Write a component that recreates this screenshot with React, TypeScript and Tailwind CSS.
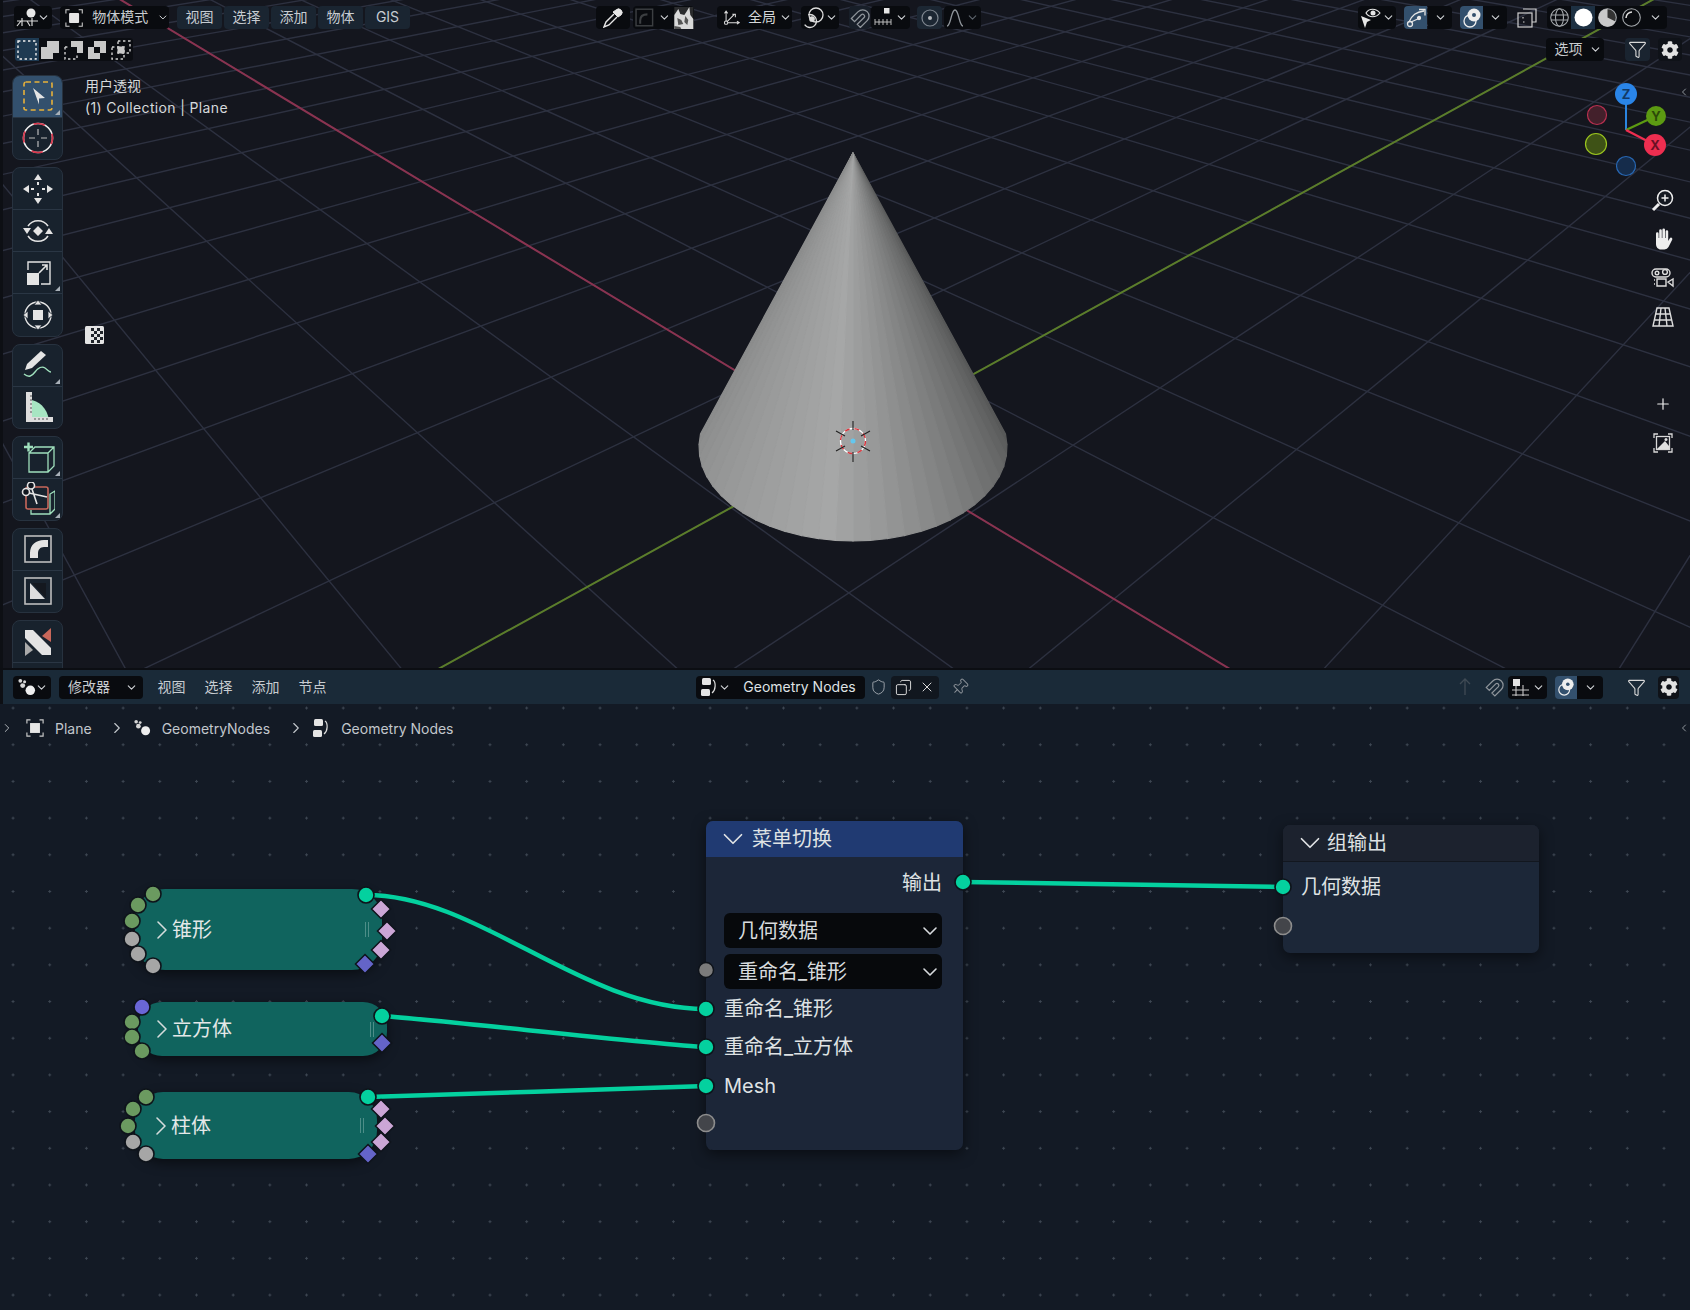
import { ChevronDown, ChevronRight, Copy, Funnel, Pin, Plus, Shield, X } from "lucide-react";
import { FaCog } from "react-icons/fa";

const O = [852, 441];
const V1 = [-416, -324];
const V2 = [2242, -325];
const STEP_U = 0.0856;
const STEP_V = 0.08;

// a grid line runs from one vanishing point through the k-th mark on the other axis
function gridLine(from: number[], along: number[], k: number, s: number) {
  const w = 1 + k * s;
  const px = (O[0] + k * s * along[0]) / w;
  const py = (O[1] + k * s * along[1]) / w;
  return { x1: from[0], y1: from[1], x2: from[0] + (px - from[0]) * 6, y2: from[1] + (py - from[1]) * 6 };
}

function range(a: number, b: number) {
  const out: number[] = [];
  for (let i = a; i <= b; i++) out.push(i);
  return out;
}

function Grid() {
  return (
    <svg className="absolute left-[-3px] top-0" width={1690} height={668}>
      {range(-12, 40).map((k) => (
        <line key={"a" + k} {...gridLine(V1, V2, k, STEP_V)} stroke="#2d3140" strokeWidth={1.4} />
      ))}
      {range(-11, 40).map((k) => (
        <line key={"b" + k} {...gridLine(V2, V1, k, STEP_U)} stroke="#2d3140" strokeWidth={1.4} />
      ))}
      <line {...gridLine(V1, V2, 0, STEP_V)} stroke="#8a3350" strokeWidth={2} />
      <line {...gridLine(V2, V1, 0, STEP_U)} stroke="#5b7d2a" strokeWidth={2} />
      <Cone />
    </svg>
  );
}

function Cone() {
  const cx = 853;
  const cy = 447;
  const n = 30;
  const pts = range(0, n).map((i) => {
    const t = ((-8 + (196 * i) / n) * Math.PI) / 180;
    return [cx + 154 * Math.cos(t), cy + 94 * Math.sin(t)];
  });
  return (
    <g>
      {pts.slice(0, n).map((p, i) => {
        const q = pts[i + 1];
        const f = i / (n - 1);
        const c = Math.round(f < 0.55 ? 88 + (f / 0.55) * 78 : 166 - ((f - 0.55) / 0.45) * 26);
        const col = `rgb(${c},${c + 1},${c + 1})`;
        return <polygon key={i} points={`853,153 ${p[0]},${p[1]} ${q[0]},${q[1]}`} fill={col} stroke={col} strokeWidth={1.2} />;
      })}
      <circle cx={853} cy={441} r={12.5} fill="none" stroke="#fff" strokeWidth={1.3} />
      <circle cx={853} cy={441} r={12.5} fill="none" stroke="#d8343c" strokeWidth={1.4} strokeDasharray="5 5" />
      <path d="M853 421v9M853 452v10M836 431l9 5M861 446l9 5M836 451l9-5M861 436l9-5" stroke="#222" strokeWidth={1.1} />
      <circle cx={853} cy={441} r={2.5} fill="#63c7ee" />
    </g>
  );
}

function Gizmo() {
  return (
    <svg className="absolute right-0 top-[80px]" width={110} height={105} viewBox="1580 80 110 105">
      <circle cx={1597} cy={115} r={9.5} fill="#43202b" stroke="#b93050" strokeWidth={1.2} />
      <circle cx={1596} cy={144} r={10.5} fill="#3e5216" stroke="#9ac41f" strokeWidth={1.2} />
      <circle cx={1626} cy={166} r={9.5} fill="#152c4b" stroke="#2868b4" strokeWidth={1.2} />
      <path d="M1626 130V94" stroke="#2a85e0" strokeWidth={2} />
      <path d="M1626 130l30-14" stroke="#5c9a12" strokeWidth={2.4} />
      <path d="M1626 130l29 15" stroke="#ee2e50" strokeWidth={2.4} />
      <circle cx={1626} cy={94} r={11} fill="#2a85e8" />
      <circle cx={1656} cy={116} r={10} fill="#5c9a12" />
      <circle cx={1655} cy={145} r={11} fill="#ee2e50" />
      <text x={1626} y={99} textAnchor="middle" fontSize={13} fontWeight={700} fill="#123a66">Z</text>
      <text x={1656} y={121} textAnchor="middle" fontSize={13} fontWeight={700} fill="#2c4a08">Y</text>
      <text x={1655} y={150} textAnchor="middle" fontSize={13} fontWeight={700} fill="#6b1024">X</text>
    </svg>
  );
}

function Chev({ dim }: { dim?: boolean }) {
  return <ChevronDown size={13} strokeWidth={2} className={dim ? "text-[#5d646c]" : "text-[#d0d3d6]"} />;
}

function Nodes3({ size = 20 }: { size?: number }) {
  return (
    <svg width={size} height={size} viewBox="0 0 20 20" fill="#d5d5d5">
      <circle cx="3.5" cy="3" r="2" />
      <circle cx="8" cy="4" r="1.6" />
      <circle cx="6" cy="8" r="2.6" />
      <circle cx="14" cy="13" r="5" fill="#eee" />
    </svg>
  );
}

function ObjectMode() {
  return (
    <svg width={20} height={20} viewBox="0 0 20 20" fill="none" stroke="#c9c9c9" strokeWidth={1.2}>
      <path d="M1 5V1h4M15 1h4v4M19 15v4h-4M5 19H1v-4" />
      <rect x="4.5" y="4.5" width="11" height="11" rx="1" fill="#e6e6e6" stroke="none" />
    </svg>
  );
}

function ViewIcon() {
  return (
    <svg width={24} height={20} viewBox="0 0 24 20" fill="none" stroke="#d8d8d8" strokeWidth={1.2}>
      <path d="M1 13h21M1 18l4-5M14 18l-3-5M6 10v8M16 10v8" />
      <circle cx="15" cy="5" r="4.5" fill="#e8e8e8" stroke="none" />
    </svg>
  );
}

function SelMode({ kind }: { kind: number }) {
  const dash = { fill: "none", stroke: "#d0d0d0", strokeWidth: 1.4, strokeDasharray: "2.4 2.6" };
  return (
    <svg width={20} height={20} viewBox="0 0 20 20">
      {kind === 0 && <rect x="1" y="1" width="18" height="18" {...dash} stroke="#f0f0f0" />}
      {kind === 1 && <path d="M7 1h12v12h-6v6H1V7h6z" fill="#c8c8c8" />}
      {kind === 2 && <><path d="M7 1h12v12h-6V7H7z" fill="#c8c8c8" /><path d="M1 7h4M1 7v12h12v-4M5 7" {...dash} /></>}
      {kind === 3 && <><path d="M7 1h12v12h-6v6H1V7h6z" fill="#c8c8c8" /><rect x="7" y="7" width="6" height="6" fill="#0a0c10" /></>}
      {kind === 4 && <><rect x="1" y="7" width="12" height="12" {...dash} /><rect x="7" y="1" width="12" height="12" {...dash} /><rect x="6.5" y="6.5" width="7" height="7" fill="#c8c8c8" /></>}
    </svg>
  );
}

function ToolIcon({ kind }: { kind: string }) {
  const w = "#e4e4e4";
  const green = "#9fe0bd";
  return (
    <svg width={34} height={34} viewBox="0 0 34 34" fill="none">
      {kind === "select" && (
        <>
          <rect x="3" y="3" width="28" height="28" rx="2" stroke="#e8b13a" strokeWidth={1.6} strokeDasharray="5 3.5" />
          <path d="M12 9l12 10-6 .5 0 6z" fill={w} />
        </>
      )}
      {kind === "cursor" && (
        <>
          <circle cx="17" cy="17" r="14.5" stroke="#eee" strokeWidth={1.6} />
          <circle cx="17" cy="17" r="14.5" stroke="#d8344a" strokeWidth={1.7} strokeDasharray="11.4 11.4" strokeDashoffset={5} />
          <path d="M17 8v6M17 20v6M8 17h6M20 17h6" stroke="#bbb" strokeWidth={1.2} />
        </>
      )}
      {kind === "move" && (
        <path d="M17 2l4 6h-8zM17 32l4-6h-8zM2 17l6-4v8zM32 17l-6-4v8zM16 10h2v3h-2zM16 21h2v3h-2zM10 16h3v2h-3zM21 16h3v2h-3z" fill={w} />
      )}
      {kind === "rotate" && (
        <>
          <path d="M7 12A12 12 0 0 1 27 12M27 22A12 12 0 0 1 7 22" stroke={w} strokeWidth={1.5} />
          <path d="M17 12l5 5-5 5-5-5zM2 14h8l-4 6zM24 20h8l-4-6z" fill={w} />
        </>
      )}
      {kind === "scale" && (
        <>
          <rect x="6" y="17" width="12" height="12" fill={w} />
          <path d="M7 14V6h22v22H20" stroke={w} strokeWidth={1.4} />
          <path d="M18 17l8-8M21 9h5v5" stroke={w} strokeWidth={1.6} />
        </>
      )}
      {kind === "transform" && (
        <>
          <circle cx="17" cy="17" r="13" stroke={w} strokeWidth={1.4} />
          <rect x="12" y="12" width="10" height="10" fill={w} />
          <path d="M17 2l4 5h-8zM17 32l4-5h-8zM2 17l5-4v8zM32 17l-5-4v8z" fill={w} stroke="#18222d" strokeWidth={0.8} />
        </>
      )}
      {kind === "annotate" && (
        <>
          <path d="M4 22l2-6L20 3l5 4L11 20z" fill={w} />
          <path d="M3 26c5 4 8 2 11-2s7-6 10-4 4 4 6 4" stroke={green} strokeWidth={1.4} />
        </>
      )}
      {kind === "measure" && (
        <>
          <path d="M8 30V10c10 0 18 8 20 20z" fill="#a7e5c2" />
          <path d="M5 2h6v25h21v5H5z" fill="#ddd" />
          <path d="M9 6h2M9 10h2M9 14h2M9 18h2M9 22h2M14 28v2M18 28v2M22 28v2M26 28v2" stroke="#555" strokeWidth={1} />
        </>
      )}
      {kind === "add" && (
        <>
          <path d="M3 7h9M7.500 2.500v9" stroke={green} strokeWidth={2.4} />
          <path d="M8 13h19v19H8zM8 13l6-6h19v19l-6 6M27 13l6-6" stroke={green} strokeWidth={1.3} />
        </>
      )}
      {kind === "cut" && (
        <>
          <path d="M10 28v4h19l5-5V9l-5 3v20M29 12" stroke={green} strokeWidth={1.3} />
          <rect x="5" y="5" width="22" height="22" rx="2" stroke="#c8675a" strokeWidth={1.6} />
          <circle cx="5" cy="10" r="3.5" fill="#10161e" stroke={w} strokeWidth={1.6} />
          <circle cx="10" cy="3.5" r="3.5" fill="#10161e" stroke={w} strokeWidth={1.6} />
          <path d="M8 11l18 4M11 7l5 15" stroke={w} strokeWidth={1.6} />
        </>
      )}
      {kind === "fillet" && (
        <>
          <rect x="4" y="4" width="26" height="26" stroke="#bdbdbd" strokeWidth={1.6} />
          <path d="M9 26v-5c0-8 6-13 14-13h4v7h-4c-4 0-6 3-6 6v5z" fill={w} />
        </>
      )}
      {kind === "shear" && (
        <>
          <rect x="4" y="4" width="26" height="26" stroke="#bdbdbd" strokeWidth={1.6} />
          <path d="M9 9v16h15z" fill="#ddd" />
          <path d="M11 9h14v15z" fill="#14181f" />
        </>
      )}
      {kind === "knife" && (
        <>
          <path d="M4 6h8l18 18v7H21L4 14z" fill={w} />
          <path d="M21 12l9-8v14z" fill="#c8675a" />
          <path d="M4 18l8 8-8 6z" fill="#aaa" />
        </>
      )}
    </svg>
  );
}

function Tool({ kind, active, corner, last }: { kind: string; active?: boolean; corner?: boolean; last?: boolean }) {
  return (
    <div className={`relative flex h-[41.5px] items-center justify-center ${last ? "" : "border-b border-[#2a3644]"} ${active ? "bg-[#33506d]" : ""}`}>
      <ToolIcon kind={kind} />
      {corner && <span className="absolute bottom-[2px] right-[2px] h-0 w-0 border-b-[5px] border-l-[5px] border-b-[#a8b0b8] border-l-transparent" />}
    </div>
  );
}

function ToolGroup({ children, tall }: { children: React.ReactNode; tall?: boolean }) {
  return <div className={`flex w-[51px] shrink-0 flex-col justify-around overflow-hidden rounded-lg border border-[#27323f] bg-[#18222d] ${tall ? "h-[170px]" : "h-[85px]"}`}>{children}</div>;
}

function Menu({ label, boxed }: { label: string; boxed?: boolean }) {
  return <div className={`flex h-[23px] items-center justify-center rounded-[4px] pb-[2px] text-[14px] text-[#c7ccd1] ${boxed ? "w-[45px] bg-[#1a2531]" : "w-[47px]"}`}>{label}</div>;
}

function Box({ children, className = "" }: { children: React.ReactNode; className?: string }) {
  return <div className={`flex h-[23px] items-center rounded-[4px] bg-[#090b0f] ${className}`}>{children}</div>;
}

function Rhino() {
  return (
    <svg width={20} height={22} viewBox="0 0 19 22">
      <rect width="19" height="22" fill="#2a2b2d" />
      <path d="M0 8l4-6 2 5 4 1 2-3 3-5 1 8 3 4v10H0z" fill="#d9d9d9" />
      <path d="M3 11l4 2 2 4-5 1zM11 9l3 4-1 5-3-3zM0 19l6 1 1 2H0z" fill="#555" />
    </svg>
  );
}

function GlobalAxis() {
  return (
    <svg width={22} height={20} viewBox="0 0 22 20" fill="none" stroke="#ddd" strokeWidth={1.3}>
      <path d="M4 16V2M2 4l2-3 2 3M4 16h16M18 14l3 2-3 2M4 16L15 5M12 5h4v4" />
      <circle cx="4" cy="16" r="2.2" fill="#10131a" />
    </svg>
  );
}

function PivotLink() {
  return (
    <svg width={22} height={22} viewBox="0 0 22 22" fill="none" stroke="#ddd" strokeWidth={1.3}>
      <circle cx="14" cy="8" r="7" />
      <circle cx="8" cy="14" r="6.5" strokeDasharray="28 12" strokeDashoffset={12} />
      <circle cx="10" cy="12" r="2.2" fill="#ddd" />
    </svg>
  );
}

function MagnetIcon() {
  return (
    <svg width={20} height={20} viewBox="0 0 22 22" fill="none" stroke="#8f959b" strokeWidth={1.4}>
      <path d="M1.500 11.500L9 4a7 7 0 0 1 9.900 9.900L11.400 21.400 8 18l7.500-7.500a2.200 2.200 0 0 0-3.100-3.100L5 15z" />
    </svg>
  );
}

function Snap() {
  return (
    <svg width={18} height={22} viewBox="0 0 18 22" fill="none" stroke="#bbb" strokeWidth={1}>
      <rect x="10" y="1" width="5.5" height="5.5" fill="#e6e6e6" stroke="none" />
      <path d="M1 12v6M5 12v6M9 12v6M13 12v6M17 12v6M1 15h16" />
    </svg>
  );
}

function Falloff({ dim }: { dim?: boolean }) {
  return (
    <svg width={18} height={20} viewBox="0 0 18 20" fill="none" stroke={dim ? "#5f666e" : "#8f959b"} strokeWidth={1.3}>
      <path d="M1 18c4 0 4-16 8-16s4 16 8 16" />
    </svg>
  );
}

function PropCircle() {
  return (
    <svg width={18} height={18} viewBox="0 0 18 18" fill="none" stroke="#7f8790" strokeWidth={1.2}>
      <circle cx="9" cy="9" r="8" />
      <circle cx="9" cy="9" r="2" fill="#b5b9bd" stroke="none" />
    </svg>
  );
}

function EyeCursor() {
  return (
    <svg width={22} height={22} viewBox="0 0 22 22" fill="none" stroke="#e6e6e6" strokeWidth={1.2}>
      <path d="M6 6c3-5 10-5 14 0-4 5-11 5-14 0z" />
      <circle cx="13" cy="6" r="2.5" fill="#e6e6e6" stroke="none" />
      <path d="M1 9l10 4-4 2-2 6z" fill="#e6e6e6" stroke="none" />
    </svg>
  );
}

function GizmoArrow() {
  return (
    <svg width={20} height={20} viewBox="0 0 20 20" fill="none" stroke="#e6e6e6" strokeWidth={1.3}>
      <path d="M3 14C6 7 10 4 18 3M13 1.500h6v6M5 14l9-4" />
      <circle cx="4" cy="16" r="2.5" />
      <circle cx="13" cy="10" r="1.5" fill="#e6e6e6" />
    </svg>
  );
}

function OverlayIcon({ size = 20 }: { size?: number }) {
  return (
    <svg width={size} height={size} viewBox="0 0 20 20" fill="none" stroke="#eee" strokeWidth={1.3}>
      <circle cx="8" cy="13" r="6" />
      <circle cx="12" cy="7" r="6.5" fill="#eee" stroke="none" />
      <circle cx="12" cy="7" r="2" fill="#33506d" stroke="none" />
    </svg>
  );
}

function Xray() {
  return (
    <svg width={20} height={20} viewBox="0 0 20 20" fill="none" stroke="#d0d0d0" strokeWidth={1.2}>
      <path d="M6 1h13v13h-4" />
      <rect x="1" y="5" width="14" height="14" />
      <path d="M6 9v3M6 14h3" strokeDasharray="1.5 1.5" />
    </svg>
  );
}

function Shading({ kind }: { kind: number }) {
  return (
    <svg width={19} height={19} viewBox="0 0 19 19" fill="none" stroke="#a4a8ac" strokeWidth={1.1}>
      {kind === 0 && (
        <>
          <circle cx="9.5" cy="9.5" r="8.8" />
          <ellipse cx="9.5" cy="9.5" rx="4" ry="8.8" />
          <path d="M1 7h17M1 12h17" />
        </>
      )}
      {kind === 1 && <circle cx="9.5" cy="9.5" r="9" fill="#fff" stroke="none" />}
      {kind === 2 && (
        <>
          <circle cx="9.5" cy="9.5" r="8.8" fill="#333" />
          <path d="M9.500.7v8.800l8 4a8.800 8.800 0 0 1-8 5.200 8.800 8.800 0 0 1 0-18z" fill="#c9c9c9" stroke="none" />
        </>
      )}
      {kind === 3 && (
        <>
          <circle cx="9.5" cy="9.5" r="8.8" />
          <path d="M4 10a6 6 0 0 1 6-6" stroke="#ddd" strokeWidth={1.6} />
        </>
      )}
    </svg>
  );
}

function NodeTreeIcon() {
  return (
    <svg width={18} height={20} viewBox="0 0 18 20" fill="none" stroke="#ddd" strokeWidth={1.2}>
      <rect x="2" y="1" width="9" height="7" rx="1.5" fill="#e4e4e4" stroke="none" />
      <rect x="1" y="12" width="9" height="7" rx="1.5" fill="#e4e4e4" stroke="none" />
      <path d="M13 3c3 2 3 10-1 13" />
    </svg>
  );
}

function HandIcon() {
  return (
    <svg width={24} height={24} viewBox="0 0 24 24" fill="#eee">
      <path d="M5 13V6.500a1.300 1.300 0 0 1 2.600 0V11h.6V3.500a1.300 1.300 0 0 1 2.600 0V11h.6V2.800a1.300 1.300 0 0 1 2.600 0V11h.6V4.500a1.300 1.300 0 0 1 2.600 0V14l1.800-3a1.400 1.400 0 0 1 2.300 1.400L17.500 20a4.500 4.500 0 0 1-4 2.500H10c-3 0-5-2.500-5-5.500z" />
    </svg>
  );
}

function RightTools() {
  return (
    <div className="absolute right-[6px] top-[181px] flex w-[42px] flex-col items-center text-[#ececec]">
      <svg className="mt-[7px]" width={24} height={24} viewBox="0 0 24 24" fill="none" stroke="#eee" strokeWidth={1.5}>
        <circle cx="14" cy="10" r="7.5" fill="#141820" />
        <path d="M14 6.500v7M10.500 10h7" />
        <path d="M8 16l-6 6" strokeWidth={3} />
      </svg>
      <div className="mt-[15px]"><HandIcon /></div>
      <svg className="mt-[14px]" width={24} height={24} viewBox="0 0 24 24" fill="none" stroke="#ddd" strokeWidth={1.4}>
        <rect x="1" y="4" width="18" height="8" rx="4" />
        <circle cx="6" cy="8" r="1.8" />
        <circle cx="14" cy="7" r="2.4" />
        <path d="M3 15h1M6 14h9v7H6zM3 19h1M17 17l5-3v7z" />
      </svg>
      <svg className="mt-[17px]" width={22} height={22} viewBox="0 0 22 22" fill="none" stroke="#ddd" strokeWidth={1.4}>
        <path d="M5 2h12l4 18H1zM3.500 8h15M2 14h18M9 2l-2 18M13 2l2 18" />
      </svg>
      <Plus size={18} strokeWidth={1.6} className="mt-[67px]" />
      <svg className="mt-[20px]" width={20} height={20} viewBox="0 0 20 20" fill="none" stroke="#d8d8d8" strokeWidth={1.3}>
        <path d="M1 5V1h4M15 1h4v4M19 15v4h-4M5 19H1v-4" />
        <rect x="3.5" y="3.5" width="13" height="13" />
        <path d="M4 16l8-8 4 5v3z" fill="#e0e0e0" stroke="none" />
        <circle cx="13" cy="6.500" r="1.5" fill="#e0e0e0" stroke="none" />
      </svg>
    </div>
  );
}

function Viewport() {
  return (
    <section className="relative h-[668px] overflow-hidden border-l-[3px] border-[#0d0f14] bg-[#14161e]">
      <Grid />
      <Gizmo />
      <RightTools />
      <ChevronRight size={12} className="absolute right-0 top-[86px] rotate-180 text-[#8f959b]" />

      <div className="relative flex flex-col">
        <div className="flex items-center pl-[11px] pt-[6px]">
          <Box className="w-[38px] justify-center gap-px">
            <ViewIcon />
            <span className="-ml-[4px]"><Chev /></span>
          </Box>
          <Box className="ml-[8px] w-[109px] gap-[9px] pl-[5px] text-[14px] text-[#c8ccd0]">
            <ObjectMode />
            <span className="mb-[2px] w-[56px] whitespace-nowrap">物体模式</span>
            <Chev />
          </Box>
          <div className="ml-[8px] flex gap-[2px]">
            {["视图", "选择", "添加", "物体", "GIS"].map((m) => (
              <Menu key={m} label={m} boxed />
            ))}
          </div>

          <Box className="ml-[186px] w-[34px] justify-center">
            <svg width={20} height={20} viewBox="0 0 20 20" fill="#e6e6e6" stroke="#e6e6e6">
              <path d="M13 2a3 3 0 0 1 5 5l-3 2-5-5z" />
              <path d="M11 6L3 14l-2 5 5-2 8-8" fill="none" strokeWidth={1.4} />
            </svg>
          </Box>
          <Box className="ml-[3px] w-[61px] gap-[4px] pl-[2px]">
            <svg width={19} height={19} viewBox="0 0 18 18" fill="none" stroke="#3c3f42" strokeWidth={1.4}>
              <rect x="1" y="1" width="16" height="16" />
              <path d="M5 15v-3c0-4 3-6 7-6" strokeWidth={2} />
            </svg>
            <Chev />
            <Rhino />
          </Box>
          <Box className="ml-[23px] w-[75px] gap-[8px] pl-[6px] text-[14px] text-[#d5d8da]">
            <GlobalAxis />
            <span className="mb-[2px] whitespace-nowrap">全局</span>
            <span className="-ml-[5px]"><Chev /></span>
          </Box>
          <Box className="ml-[9px] w-[38px] justify-center gap-[1px]">
            <PivotLink />
            <Chev />
          </Box>
          <div className="ml-[10px] flex h-[23px] w-[21px] items-center justify-center rounded-[4px] bg-[#181f29]">
            <MagnetIcon />
          </div>
          <Box className="ml-px w-[39px] justify-center gap-[3px]">
            <Snap />
            <Chev />
          </Box>
          <div className="ml-[7px] flex h-[23px] w-[25px] items-center justify-center rounded-[4px] bg-[#1c2733]">
            <PropCircle />
          </div>
          <Box className="ml-[2px] w-[37px] justify-center gap-[2px]">
            <Falloff />
            <Chev dim />
          </Box>

          <Box className="ml-[377px] w-[38px] justify-center">
            <EyeCursor />
            <Chev />
          </Box>
          <div className="ml-[8px] flex h-[23px] w-[23px] items-center justify-center rounded-l-[4px] bg-[#33506d]">
            <GizmoArrow />
          </div>
          <Box className="ml-px w-[24px] justify-center rounded-l-none"><Chev /></Box>
          <div className="ml-[8px] flex h-[23px] w-[23px] items-center justify-center rounded-l-[4px] bg-[#33506d]">
            <OverlayIcon />
          </div>
          <Box className="w-[24px] justify-center rounded-l-none"><Chev /></Box>
          <div className="ml-[10px] flex h-[23px] w-[20px] items-center justify-center">
            <Xray />
          </div>
          <Box className="ml-[10px] w-[120px]">
            <span className="flex w-[24px] justify-center"><Shading kind={0} /></span>
            <span className="flex h-[23px] w-[24px] items-center justify-center bg-[#1d3042]"><Shading kind={1} /></span>
            <span className="flex w-[24px] justify-center"><Shading kind={2} /></span>
            <span className="flex w-[24px] justify-center"><Shading kind={3} /></span>
            <span className="flex w-[24px] justify-center"><Chev /></span>
          </Box>
        </div>

        <div className="flex items-center pl-[12px] pt-[9px]">
          <div className="flex h-[23px] items-center rounded-[3px] bg-[#0b0d12]">
            {[0, 1, 2, 3, 4].map((k) => (
              <span key={k} className={`flex h-[23px] w-[23.5px] items-center justify-center ${k === 0 ? "rounded-l-[3px] bg-[#1e3a52]" : ""}`}>
                <SelMode kind={k} />
              </span>
            ))}
          </div>
          <Box className="ml-[1413px] w-[58px] gap-[6px] pl-[9px] text-[14px] text-[#c8ccd0]">
            <span className="mb-[2px] whitespace-nowrap">选项</span>
            <Chev />
          </Box>
          <div className="ml-[21px] flex h-[23px] w-[25px] items-center justify-center rounded-[4px] bg-[#1a2430]">
            <Funnel size={19} strokeWidth={1.4} className="text-[#d8d8d8]" />
          </div>
          <div className="ml-[8px] flex h-[23px] w-[24px] items-center justify-center rounded-[4px] bg-[#0f1218]">
            <FaCog size={18} className="text-[#e2e2e2]" />
          </div>
        </div>

        <div className="flex pl-[9px] pt-[14px]">
          <div className="flex flex-col gap-[7px]">
            <ToolGroup>
              <Tool kind="select" active corner />
              <Tool kind="cursor" last />
            </ToolGroup>
            <ToolGroup tall>
              <Tool kind="move" />
              <Tool kind="rotate" />
              <Tool kind="scale" corner />
              <Tool kind="transform" last />
            </ToolGroup>
            <ToolGroup>
              <Tool kind="annotate" corner />
              <Tool kind="measure" last />
            </ToolGroup>
            <ToolGroup>
              <Tool kind="add" corner />
              <Tool kind="cut" corner last />
            </ToolGroup>
            <ToolGroup>
              <Tool kind="fillet" />
              <Tool kind="shear" last />
            </ToolGroup>
            <ToolGroup>
              <Tool kind="knife" />
              <Tool kind="knife" last />
            </ToolGroup>
          </div>
          <div className="ml-[22px] flex flex-col">
            <div className="text-[14px] leading-[22px] text-[#d6d9db]">用户透视</div>
            <div className="text-[14px] leading-[22px] tracking-[0.35px] text-[#d6d9db]">(1) Collection | Plane</div>
            <svg className="mt-[206px]" width={19} height={20} viewBox="0 0 19 20">
              <rect x="0" y="1" width="19" height="18" rx="1.5" fill="#e4e4e4" />
              <path d="M6 3h3v3H6zM12 3h3v3h-3zM9 6h3v3H9zM15 6h3v3h-3zM6 9h3v3H6zM12 9h3v3h-3zM9 12h3v3H9zM15 12h3v3h-3zM6 15h3v3H6zM12 15h3v3h-3z" fill="#20242a" />
            </svg>
          </div>
        </div>
      </div>
    </section>
  );
}

function EditorHeader() {
  return (
    <header className="flex h-[34px] items-center border-l-[3px] border-[#0d0f14] bg-[#1a2a38] pl-[10px]">
      <Box className="w-[38px] justify-center">
        <Nodes3 size={19} />
        <span className="-ml-px"><Chev /></span>
      </Box>
      <Box className="ml-[8px] w-[84px] gap-[15px] pl-[9px] text-[14px] text-[#c8ccd0]">
        <span className="mb-[2px] whitespace-nowrap">修改器</span>
        <Chev />
      </Box>
      <div className="ml-[5px] flex">
        {["视图", "选择", "添加", "节点"].map((m) => (
          <Menu key={m} label={m} />
        ))}
      </div>
      <Box className="ml-[360px] w-[38px] justify-center rounded-r-none">
        <NodeTreeIcon />
        <Chev />
      </Box>
      <Box className="w-[131px] justify-center rounded-l-none pb-[2px] text-[14px] text-[#dfe2e4]">Geometry Nodes</Box>
      <div className="ml-[5px] flex w-[17px] justify-center">
        <Shield size={18} strokeWidth={1.3} className="text-[#a3aab0]" />
      </div>
      <Box className="ml-[4px] bg-[#11171f]">
        <span className="flex w-[24px] justify-center"><Copy size={17} strokeWidth={1.4} className="text-[#d8d8d8] -scale-x-100" /></span>
        <span className="flex w-[24px] justify-center"><X size={16} strokeWidth={1.5} className="text-[#d8d8d8]" /></span>
      </Box>
      <div className="ml-[10px] flex w-[21px] justify-center">
        <Pin size={18} strokeWidth={1.3} className="rotate-45 text-[#8a9097]" />
      </div>
      <div className="ml-[485px] flex w-[20px] justify-center">
        <svg width={14} height={20} viewBox="0 0 14 20" fill="none" stroke="#3f4a54" strokeWidth={1.3}>
          <path d="M7 18V3M2 7l5-5 5 5" />
        </svg>
      </div>
      <div className="ml-[10px] flex w-[19px] justify-center">
        <MagnetIcon />
      </div>
      <Box className="ml-[4px] w-[39px] justify-center gap-[2px]">
        <svg width={19} height={19} viewBox="0 0 19 19" fill="none" stroke="#c8c8c8" strokeWidth={1.1}>
          <path d="M1 12h17M1 17h17M12 7v11" />
          <rect x="2" y="1" width="7" height="7" fill="#e4e4e4" stroke="none" />
          <path d="M5 8v10" />
        </svg>
        <Chev />
      </Box>
      <div className="ml-[8px] flex h-[23px] w-[22px] items-center justify-center rounded-l-[4px] bg-[#33506d]">
        <OverlayIcon size={18} />
      </div>
      <Box className="w-[26px] justify-center rounded-l-none"><Chev /></Box>
      <div className="ml-[23px] flex w-[20px] justify-center">
        <Funnel size={19} strokeWidth={1.4} className="text-[#d8d8d8]" />
      </div>
      <div className="ml-[12px] flex h-[23px] w-[21px] items-center justify-center rounded-[4px] bg-[#0f1218]">
        <FaCog size={18} className="text-[#e2e2e2]" />
      </div>
    </header>
  );
}

function ObjectModeSmall() {
  return (
    <svg width={18} height={18} viewBox="0 0 20 20" fill="none" stroke="#c9c9c9" strokeWidth={1.3}>
      <path d="M1 5V1h4M15 1h4v4M19 15v4h-4M5 19H1v-4" />
      <rect x="4.5" y="4.5" width="11" height="11" fill="#e6e6e6" stroke="none" />
    </svg>
  );
}

function Crumbs() {
  return (
    <nav className="relative flex h-[24px] items-center text-[14px] text-[#c2c7cc]">
      <ChevronRight size={14} strokeWidth={1.5} />
      <span className="ml-[12px]"><ObjectModeSmall /></span>
      <span className="ml-[11px]">Plane</span>
      <ChevronRight size={18} strokeWidth={1.5} className="ml-[16px]" />
      <span className="ml-[7px]"><Nodes3 size={18} /></span>
      <span className="ml-[11px]">GeometryNodes</span>
      <ChevronRight size={18} strokeWidth={1.5} className="ml-[17px]" />
      <span className="ml-[7px]"><NodeTreeIcon /></span>
      <span className="ml-[11px]">Geometry Nodes</span>
    </nav>
  );
}

const TEAL = "#04d19f";
const GREEN = "#6b9a60";
const GRAY = "#a6a6a6";
const BLUE = "#6a66d6";
const PINK = "#cba6d6";
const PURPLE = "#6464c8";

const circles: [number, number, string][] = [
  [153, 894, GREEN], [138, 905, GREEN], [132, 921, GREEN], [132, 939, GRAY], [138, 954, GRAY], [153, 966, GRAY],
  [142, 1007, BLUE], [132, 1022, GREEN], [132, 1037, GREEN], [142, 1051, GREEN],
  [146, 1097, GREEN], [133, 1109, GREEN], [128, 1126, GREEN], [133, 1142, GRAY], [146, 1154, GRAY],
  [366, 895, TEAL], [382, 1016, TEAL], [368, 1097, TEAL],
  [963, 882, TEAL], [706, 1009, TEAL], [706, 1047, TEAL], [706, 1086, TEAL], [1283, 887, TEAL],
];

const diamonds: [number, number, string][] = [
  [381, 909, PINK], [387, 931, PINK], [381, 950, PINK], [365, 964, PURPLE],
  [382, 1043, PURPLE],
  [381, 1109, PINK], [385, 1126, PINK], [381, 1142, PINK], [368, 1154, PURPLE],
];

function Wires() {
  return (
    <svg className="absolute left-0 top-0" width={1690} height={606} viewBox="0 704 1690 606" fill="none" stroke={TEAL} strokeWidth={4.5}>
      <path d="M366 895C480 895 580 1009 706 1009" />
      <path d="M382 1016C440 1020 650 1044 706 1047" />
      <path d="M368 1097C440 1095 640 1088 706 1086" />
      <path d="M963 882C1040 883 1200 886 1283 887" />
    </svg>
  );
}

function Sockets() {
  return (
    <svg className="pointer-events-none absolute left-0 top-0" width={1690} height={606} viewBox="0 704 1690 606">
      {circles.map(([x, y, c], i) => (
        <circle key={i} cx={x} cy={y} r={8} fill={c} stroke="#0e131a" strokeWidth={1.6} />
      ))}
      {diamonds.map(([x, y, c], i) => (
        <path key={i} d={`M${x} ${y - 9.5}l9.5 9.5-9.5 9.5-9.5-9.5z`} fill={c} stroke="#0e131a" strokeWidth={1.5} />
      ))}
      <circle cx={706} cy={970} r={7.5} fill="#7b7b7b" stroke="#0e131a" strokeWidth={1.4} />
      <circle cx={706} cy={1123} r={8.5} fill="#43454a" stroke="#8d8d8d" strokeWidth={1.6} />
      <circle cx={1283} cy={926} r={8.5} fill="#43454a" stroke="#8d8d8d" strokeWidth={1.6} />
    </svg>
  );
}

function Collapsed({ label, className }: { label: string; className: string }) {
  return (
    <div className={`absolute flex items-center bg-[#10645e] text-[20px] text-[#e4e8e8] shadow-[0_4px_12px_rgba(0,0,0,0.5)] ${className}`}>
      <ChevronRight size={32} strokeWidth={1.2} className="shrink-0 text-[#d5dcdc]" />
      <span className="-ml-[6px] whitespace-nowrap">{label}</span>
      <span className="absolute right-[13px] h-[15px] w-[4px] border-x border-[#4d8e88]" />
    </div>
  );
}

function NodeSelect({ label, className }: { label: string; className: string }) {
  return (
    <div className={`ml-[18px] flex h-[35px] w-[218px] items-center justify-between rounded-[6px] bg-[#07090c] pl-[14px] text-[20px] text-[#d8dbde] ${className}`}>
      <span className="whitespace-nowrap">{label}</span>
      <ChevronDown size={24} strokeWidth={1.6} />
    </div>
  );
}

function MenuSwitch() {
  return (
    <div className="absolute left-[706px] top-[117px] h-[329px] w-[257px] overflow-hidden rounded-[7px] bg-[#1c2638] text-[20px] text-[#dfe2e4] shadow-[0_4px_14px_rgba(0,0,0,0.5)]">
      <div className="flex h-[36px] items-center bg-[#203a72] pl-[10px]">
        <ChevronDown size={34} strokeWidth={1.2} />
        <span className="ml-[2px]">菜单切换</span>
      </div>
      <div className="mt-[8px] flex h-[36px] items-center justify-end pr-[21px]">输出</div>
      <NodeSelect label="几何数据" className="mt-[12px]" />
      <NodeSelect label="重命名_锥形" className="mt-[6px]" />
      <div className="ml-[18px] mt-[2px] flex h-[36px] items-center">重命名_锥形</div>
      <div className="ml-[18px] mt-[2px] flex h-[36px] items-center">重命名_立方体</div>
      <div className="ml-[18px] mt-[3px] flex h-[36px] items-center">Mesh</div>
    </div>
  );
}

function GroupOutput() {
  return (
    <div className="absolute left-[1283px] top-[121px] h-[128px] w-[256px] overflow-hidden rounded-[7px] bg-[#1c2738] text-[20px] text-[#dfe2e4] shadow-[0_4px_14px_rgba(0,0,0,0.5)]">
      <div className="flex h-[37px] items-center border-b border-[#12171f] bg-[#1c222e] pl-[10px]">
        <ChevronDown size={34} strokeWidth={1.2} />
        <span>组输出</span>
      </div>
      <div className="ml-[18px] mt-[7px] flex h-[36px] items-center">几何数据</div>
    </div>
  );
}

function NodeEditor() {
  return (
    <section className="relative h-[606px] overflow-hidden bg-[#131a25] bg-[radial-gradient(circle,#3d4652_1px,transparent_1.3px)] bg-[length:36.7px_36.7px] [background-position:-5.3px_-14.3px]">
      <Wires />
      <Collapsed label="锥形" className="left-[135px] top-[185px] h-[81px] w-[247px] rounded-[30px] pl-[11px]" />
      <Collapsed label="立方体" className="left-[138px] top-[298px] h-[54px] w-[249px] rounded-[24px] pl-[8px]" />
      <Collapsed label="柱体" className="left-[135px] top-[388px] h-[67px] w-[242px] rounded-[28px] pl-[10px]" />
      <MenuSwitch />
      <GroupOutput />
      <Sockets />
      <div className="pt-[12px]"><Crumbs /></div>
      <ChevronRight size={12} className="absolute right-0 top-[18px] rotate-180 text-[#8f959b]" />
    </section>
  );
}

export default function App() {
  return (
    <div className="h-[1310px] w-[1690px] overflow-hidden bg-[#0c0e13] [font-family:Inter,'Noto_Sans_CJK_SC',sans-serif]">
      <Viewport />
      <div className="h-[2px]" />
      <EditorHeader />
      <NodeEditor />
    </div>
  );
}
